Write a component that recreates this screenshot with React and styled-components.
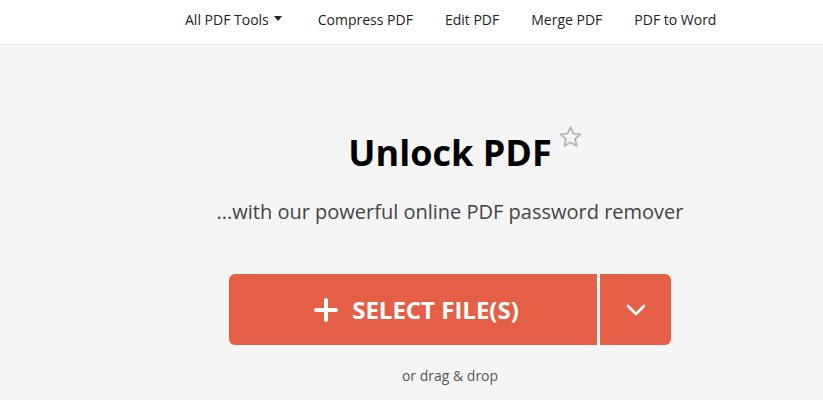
import React from "react";
import styled, { createGlobalStyle } from "styled-components";

const Global = createGlobalStyle`
  html, body { margin: 0; padding: 0; background: #f5f5f5; }
  body { font-family: "Open Sans", "Liberation Sans", sans-serif; }
`;

const Header = styled.header`
  height: 45px;
  background: #fff;
  border-bottom: 1px solid #e4e4e4;
  box-sizing: border-box;
  display: flex;
  align-items: center;
  padding-left: 185px;
`;

const Nav = styled.nav`
  display: flex;
  align-items: center;
  gap: 32px;
  height: 100%;
  padding-bottom: 6px;
  box-sizing: border-box;
`;

const NavItem = styled.a`
  font-size: 14px;
  color: #222;
  text-decoration: none;
  display: flex;
  align-items: center;
  gap: 5px;
  margin-right: ${(p) => p.$extra || 0}px;
`;

const Caret = styled.span`
  width: 0;
  height: 0;
  border-left: 4px solid transparent;
  border-right: 4px solid transparent;
  border-top: 5px solid #222;
  margin-top: -2px;
`;

const Main = styled.main`
  padding-left: 77px;
  display: flex;
  flex-direction: column;
  align-items: center;
`;

const TitleWrap = styled.div`
  position: relative;
  margin-top: 84px;
`;

const Title = styled.h1`
  margin: 0;
  font-size: 36px;
  font-weight: 700;
  color: #000;
  line-height: 48px;
`;

const Star = styled.svg`
  position: absolute;
  left: 210px;
  top: -4px;
  width: 25px;
  height: 24px;
`;

const Subtitle = styled.p`
  margin: 21px 0 0;
  font-size: 20px;
  color: #444;
  line-height: 28px;
`;

const ButtonGroup = styled.div`
  display: flex;
  margin-top: 48px;
  height: 71px;
`;

const MainButton = styled.button`
  width: 368px;
  border: none;
  background: #e55f46;
  color: #fff;
  border-radius: 6px 0 0 6px;
  display: flex;
  align-items: center;
  justify-content: center;
  gap: 14px;
  font-family: inherit;
  font-size: 24px;
  font-weight: 700;
  padding: 0 0 0 7px;
  cursor: pointer;
`;

const Divider = styled.div`
  width: 3px;
  background: #fff;
`;

const DropButton = styled.button`
  width: 71px;
  border: none;
  background: #e55f46;
  border-radius: 0 6px 6px 0;
  display: flex;
  align-items: center;
  justify-content: center;
  padding: 0;
  cursor: pointer;
`;

const Hint = styled.p`
  margin: 21px 0 0;
  font-size: 14px;
  color: #555;
`;

export default function App() {
  return (
    <>
      <Global />
      <Header>
        <Nav>
          <NavItem $extra={4}>
            All PDF Tools <Caret />
          </NavItem>
          <NavItem>Compress PDF</NavItem>
          <NavItem>Edit PDF</NavItem>
          <NavItem>Merge PDF</NavItem>
          <NavItem>PDF to Word</NavItem>
        </Nav>
      </Header>
      <Main>
        <TitleWrap>
          <Title>Unlock PDF</Title>
          <Star viewBox="0 0 24 24" fill="none" stroke="#b5b5b5" strokeWidth="1.8" strokeLinejoin="round">
            <polygon points="12,2 14.9,8.6 22,9.3 16.6,14 18.2,21 12,17.3 5.8,21 7.4,14 2,9.3 9.1,8.6" />
          </Star>
        </TitleWrap>
        <Subtitle>...with our powerful online PDF password remover</Subtitle>
        <ButtonGroup>
          <MainButton>
            <svg width="24" height="24" viewBox="0 0 24 24" stroke="#fff" strokeWidth="4" strokeLinecap="round">
              <line x1="12" y1="2" x2="12" y2="22" />
              <line x1="2" y1="12" x2="22" y2="12" />
            </svg>
            SELECT FILE(S)
          </MainButton>
          <Divider />
          <DropButton>
            <svg width="20" height="12" viewBox="0 0 20 12" fill="none" stroke="#fff" strokeWidth="2.6" strokeLinecap="round" strokeLinejoin="round">
              <polyline points="2,2 10,10 18,2" />
            </svg>
          </DropButton>
        </ButtonGroup>
        <Hint>or drag &amp; drop</Hint>
      </Main>
    </>
  );
}
